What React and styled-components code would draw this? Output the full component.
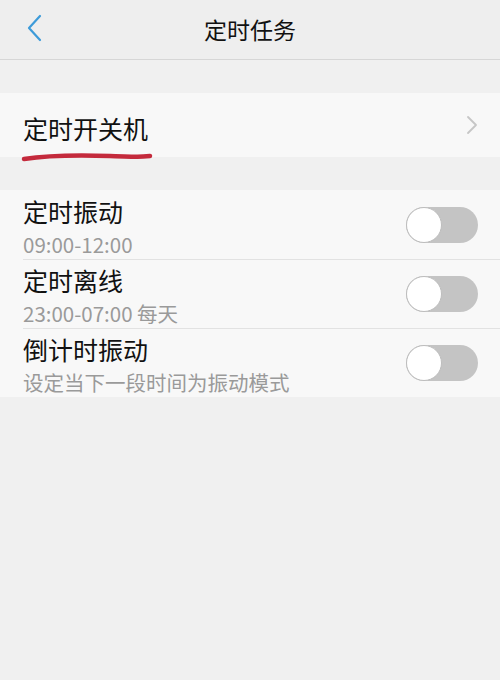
import styled, { createGlobalStyle } from "styled-components";

const Global = createGlobalStyle`
  html, body {
    margin: 0;
    padding: 0;
    background: #f0f0f0;
    font-family: "Noto Sans CJK SC", "Noto Sans", sans-serif;
  }
`;

const Page = styled.div`
  width: 500px;
  height: 680px;
  background: #f0f0f0;
  overflow: hidden;
`;

const Header = styled.div`
  position: relative;
  height: 59px;
  display: flex;
  align-items: center;
  justify-content: center;
  background: #eeeeee;
  border-bottom: 1px solid #d6d6d6;
`;

const BackBtn = styled.div`
  position: absolute;
  left: 24px;
  top: 14px;
  width: 22px;
  height: 28px;
`;

const Title = styled.div`
  font-size: 23px;
  color: #111;
  margin-top: -2px;
`;

const Group = styled.div`
  background: #f8f8f8;
  margin-top: ${(p) => p.gap}px;
  position: relative;
`;

const LinkRow = styled.div`
  height: 64px;
  display: flex;
  align-items: center;
  justify-content: space-between;
  padding: 0 22px 0 23px;
`;

const LinkText = styled.div`
  font-size: 25px;
  color: #111;
  padding-top: 5px;
`;

const Mark = styled.svg`
  position: absolute;
  left: 20px;
  top: 58px;
`;

const ToggleRow = styled.div`
  height: 69px;
  margin-left: 23px;
  padding-right: 22px;
  display: flex;
  align-items: center;
  justify-content: space-between;
  border-top: ${(p) => (p.first ? "none" : "1px solid #e2e2e2")};
  box-sizing: border-box;
`;

const Texts = styled.div`
  display: flex;
  flex-direction: column;
  padding-top: 2px;
`;

const RowTitle = styled.div`
  font-size: 25px;
  line-height: 36px;
  color: #111;
`;

const RowSub = styled.div`
  font-size: 20.5px;
  line-height: 30px;
  color: #9a9a9a;
`;

const Switch = styled.div`
  width: 72px;
  height: 36px;
  border-radius: 18px;
  background: #c4c4c4;
  position: relative;
  box-sizing: border-box;
`;

const Knob = styled.div`
  position: absolute;
  left: 0;
  top: 0;
  width: 36px;
  height: 36px;
  border-radius: 50%;
  background: #fff;
  border: 1.5px solid #bdbdbd;
  box-sizing: border-box;
`;

const rows = [
  { title: "定时振动", sub: "09:00-12:00" },
  { title: "定时离线", sub: "23:00-07:00 每天" },
  { title: "倒计时振动", sub: "设定当下一段时间为振动模式" },
];

export default function App() {
  return (
    <Page>
      <Global />
      <Header>
        <BackBtn>
          <svg width="22" height="28" viewBox="0 0 22 28">
            <path d="M16 2 L5 14 L16 26" fill="none" stroke="#3d9bd9" strokeWidth="2.2" strokeLinecap="round" strokeLinejoin="round" />
          </svg>
        </BackBtn>
        <Title>定时任务</Title>
      </Header>

      <Group gap={33}>
        <LinkRow>
          <LinkText>定时开关机</LinkText>
          <svg width="12" height="20" viewBox="0 0 12 20">
            <path d="M2 2 L10 10 L2 18" fill="none" stroke="#c6c6c6" strokeWidth="1.8" strokeLinecap="round" strokeLinejoin="round" />
          </svg>
        </LinkRow>
        <Mark width="136" height="12" viewBox="0 0 136 12">
          <path d="M4 8 C 30 4, 60 4, 90 5 S 120 6, 130 5" fill="none" stroke="#c42a3c" strokeWidth="4.5" strokeLinecap="round" />
        </Mark>
      </Group>

      <Group gap={33}>
        {rows.map((r, i) => (
          <ToggleRow key={r.title} first={i === 0}>
            <Texts>
              <RowTitle>{r.title}</RowTitle>
              <RowSub>{r.sub}</RowSub>
            </Texts>
            <Switch>
              <Knob />
            </Switch>
          </ToggleRow>
        ))}
      </Group>
    </Page>
  );
}
